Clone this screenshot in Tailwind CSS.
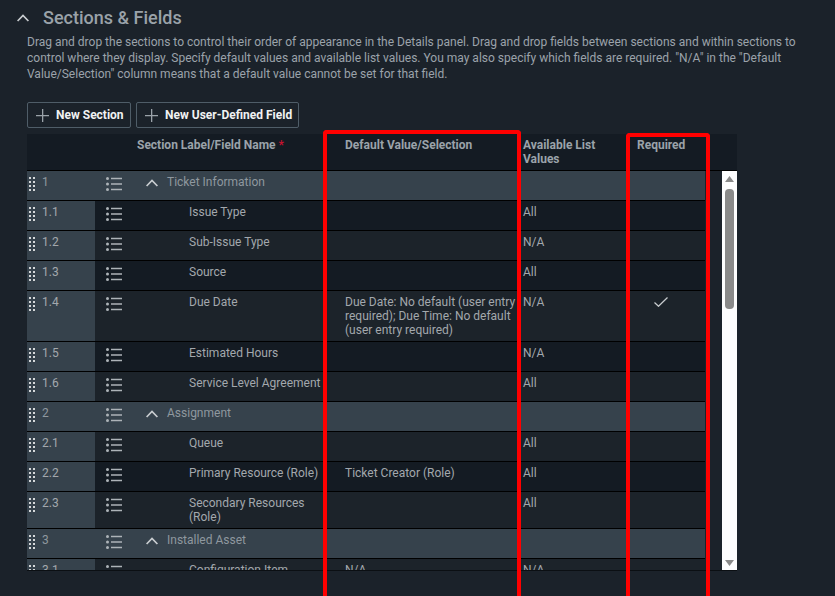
<!DOCTYPE html>
<html lang="en">
  <head>
    <meta charset="UTF-8" />
    <title>Sections &amp; Fields</title>
    <script src="https://cdn.jsdelivr.net/npm/@tailwindcss/browser@4"></script>
  </head>
  <body class="relative h-[596px] overflow-hidden bg-[#1b222a] font-['Roboto',sans-serif] text-xs leading-[14px] text-[#a3a8ad]">
    <svg class="hidden">
      <symbol id="drag" viewBox="0 0 6 14"><path fill="#d5d8da" d="M0 0h2v2H0zM4 0h2v2H4zM0 4h2v2H0zM4 4h2v2H4zM0 8h2v2H0zM4 8h2v2H4zM0 12h2v2H0zM4 12h2v2H4z" /></symbol>
      <symbol id="list" viewBox="0 0 16 14"><path fill="#adb3b8" d="M1.5 0a1.5 1.5 0 1 1 0 3 1.5 1.5 0 0 1 0-3zM1.5 5.500a1.500 1.500 0 1 1 0 3 1.500 1.500 0 0 1 0-3zM1.500 11a1.500 1.500 0 1 1 0 3 1.500 1.500 0 0 1 0-3zM5 .7h11v1.500H5zM5 6.200h11v1.500H5zM5 11.700h11v1.500H5z" /></symbol>
      <symbol id="chev" viewBox="0 0 12 8"><path fill="none" stroke="#c9cdd0" stroke-width="1.700" d="M.6 7 6 1.500 11.400 7" /></symbol>
      <symbol id="plus" viewBox="0 0 13 13"><path fill="#9aa2a9" d="M6 0h1.300v6H13v1.300H7.300V13H6V7.300H0V6h6z" /></symbol>
    </svg>

    <div class="flex items-center pt-[7px] pl-[17px]">
      <svg class="h-2 w-3"><use href="#chev" /></svg>
      <h2 class="ml-[14px] text-[18px] leading-[21px] font-medium text-[#9aa2a9]">Sections &amp; Fields</h2>
    </div>
    <p class="mt-[6px] ml-[27px] w-[775px] leading-[16px] text-[#9ba3aa]">
      Drag and drop the sections to control their order of appearance in the Details panel. Drag and drop fields between sections and within sections to control where they display. Specify default values and available list values. You may also specify which fields are required. "N/A" in the "Default Value/Selection" column means that a default value cannot be set for that field.
    </p>

    <div class="mt-[20px] ml-[27px] flex gap-[5px]">
      <button class="flex h-[26px] w-[104px] items-center rounded-[2px] border border-[#4f5d68] pl-2 font-bold text-[#f1f2f3]">
        <svg class="mr-[7px] h-[13px] w-[13px]"><use href="#plus" /></svg>New Section
      </button>
      <button class="flex h-[26px] w-[163px] items-center rounded-[2px] border border-[#4f5d68] pl-2 font-bold text-[#f1f2f3]">
        <svg class="mr-[7px] h-[13px] w-[13px]"><use href="#plus" /></svg>New User-Defined Field
      </button>
    </div>

    <div class="mt-[6px] ml-[27px] w-[710px] border-b border-[#0b0f13]">
      <div class="grid h-[37px] grid-cols-[110px_198px_188px_114px_100px] border-b border-black bg-[#141b23] pt-1 font-bold text-[#9ba3aa]">
        <div></div>
        <div>Section Label/Field Name<span class="ml-[3px] text-[#c4122f]">*</span></div>
        <div class="pl-[10px]">Default Value/Selection</div>
        <div class="pr-4">Available List Values</div>
        <div>Required</div>
      </div>
      <div class="flex h-[399px] overflow-hidden">
        <div class="w-[678px] shrink-0">
          <div class="grid grid-cols-[68px_42px_198px_188px_114px_48px] border-b border-black bg-[#36424c] text-[#8f989f]">
            <div class="flex gap-[7px] pt-1 pl-[2px]"><svg class="mt-[2px] h-[14px] w-[6px]"><use href="#drag" /></svg><span>1</span></div>
            <div class="h-[29px] pt-[6px] pl-[11px]"><svg class="h-[14px] w-4"><use href="#list" /></svg></div>
            <div class="flex gap-[9px] pt-1 pl-[9px]"><svg class="mt-[4px] h-2 w-3"><use href="#chev" /></svg><span>Ticket Information</span></div>
            <div></div><div></div><div></div>
          </div>
          <div class="grid grid-cols-[68px_42px_198px_188px_114px_48px] border-b border-black bg-[#141b23]">
            <div class="flex gap-[7px] bg-[#36424c] pt-1 pl-[2px]"><svg class="mt-[2px] h-[14px] w-[6px]"><use href="#drag" /></svg><span>1.1</span></div>
            <div class="h-[29px] pt-[6px] pl-[11px]"><svg class="h-[14px] w-4"><use href="#list" /></svg></div>
            <div class="pt-1 pr-[10px] pl-[52px]">Issue Type</div>
            <div></div><div class="pt-1">All</div><div></div>
          </div>
          <div class="grid grid-cols-[68px_42px_198px_188px_114px_48px] border-b border-black bg-[#1c232a]">
            <div class="flex gap-[7px] bg-[#36424c] pt-1 pl-[2px]"><svg class="mt-[2px] h-[14px] w-[6px]"><use href="#drag" /></svg><span>1.2</span></div>
            <div class="h-[29px] pt-[6px] pl-[11px]"><svg class="h-[14px] w-4"><use href="#list" /></svg></div>
            <div class="pt-1 pr-[10px] pl-[52px]">Sub-Issue Type</div>
            <div></div><div class="pt-1">N/A</div><div></div>
          </div>
          <div class="grid grid-cols-[68px_42px_198px_188px_114px_48px] border-b border-black bg-[#141b23]">
            <div class="flex gap-[7px] bg-[#36424c] pt-1 pl-[2px]"><svg class="mt-[2px] h-[14px] w-[6px]"><use href="#drag" /></svg><span>1.3</span></div>
            <div class="h-[29px] pt-[6px] pl-[11px]"><svg class="h-[14px] w-4"><use href="#list" /></svg></div>
            <div class="pt-1 pr-[10px] pl-[52px]">Source</div>
            <div></div><div class="pt-1">All</div><div></div>
          </div>
          <div class="grid grid-cols-[68px_42px_198px_188px_114px_48px] border-b border-black bg-[#1c232a]">
            <div class="flex gap-[7px] bg-[#36424c] pt-1 pl-[2px]"><svg class="mt-[2px] h-[14px] w-[6px]"><use href="#drag" /></svg><span>1.4</span></div>
            <div class="h-[50px] pt-[6px] pl-[11px]"><svg class="h-[14px] w-4"><use href="#list" /></svg></div>
            <div class="pt-1 pr-[10px] pl-[52px]">Due Date</div>
            <div class="pt-1 pr-[4px] pl-[10px]">Due Date: No default (user entry required); Due Time: No default (user entry required)</div>
            <div class="pt-1">N/A</div>
            <div class="flex justify-center pt-[6px]"><svg class="h-[10px] w-[14px]" viewBox="0 0 14 10"><path fill="none" stroke="#c9cdd0" stroke-width="1.200" d="M.5 5.500 4.500 9.300 13.500.5" /></svg></div>
          </div>
          <div class="grid grid-cols-[68px_42px_198px_188px_114px_48px] border-b border-black bg-[#141b23]">
            <div class="flex gap-[7px] bg-[#36424c] pt-1 pl-[2px]"><svg class="mt-[2px] h-[14px] w-[6px]"><use href="#drag" /></svg><span>1.5</span></div>
            <div class="h-[29px] pt-[6px] pl-[11px]"><svg class="h-[14px] w-4"><use href="#list" /></svg></div>
            <div class="pt-1 pr-[10px] pl-[52px]">Estimated Hours</div>
            <div></div><div class="pt-1">N/A</div><div></div>
          </div>
          <div class="grid grid-cols-[68px_42px_198px_188px_114px_48px] border-b border-black bg-[#1c232a]">
            <div class="flex gap-[7px] bg-[#36424c] pt-1 pl-[2px]"><svg class="mt-[2px] h-[14px] w-[6px]"><use href="#drag" /></svg><span>1.6</span></div>
            <div class="h-[29px] pt-[6px] pl-[11px]"><svg class="h-[14px] w-4"><use href="#list" /></svg></div>
            <div class="pt-1 pr-[10px] pl-[52px]">Service Level Agreement</div>
            <div></div><div class="pt-1">All</div><div></div>
          </div>
          <div class="grid grid-cols-[68px_42px_198px_188px_114px_48px] border-b border-black bg-[#36424c] text-[#8f989f]">
            <div class="flex gap-[7px] pt-1 pl-[2px]"><svg class="mt-[2px] h-[14px] w-[6px]"><use href="#drag" /></svg><span>2</span></div>
            <div class="h-[29px] pt-[6px] pl-[11px]"><svg class="h-[14px] w-4"><use href="#list" /></svg></div>
            <div class="flex gap-[9px] pt-1 pl-[9px]"><svg class="mt-[4px] h-2 w-3"><use href="#chev" /></svg><span>Assignment</span></div>
            <div></div><div></div><div></div>
          </div>
          <div class="grid grid-cols-[68px_42px_198px_188px_114px_48px] border-b border-black bg-[#1c232a]">
            <div class="flex gap-[7px] bg-[#36424c] pt-1 pl-[2px]"><svg class="mt-[2px] h-[14px] w-[6px]"><use href="#drag" /></svg><span>2.1</span></div>
            <div class="h-[29px] pt-[6px] pl-[11px]"><svg class="h-[14px] w-4"><use href="#list" /></svg></div>
            <div class="pt-1 pr-[10px] pl-[52px]">Queue</div>
            <div></div><div class="pt-1">All</div><div></div>
          </div>
          <div class="grid grid-cols-[68px_42px_198px_188px_114px_48px] border-b border-black bg-[#141b23]">
            <div class="flex gap-[7px] bg-[#36424c] pt-1 pl-[2px]"><svg class="mt-[2px] h-[14px] w-[6px]"><use href="#drag" /></svg><span>2.2</span></div>
            <div class="h-[29px] pt-[6px] pl-[11px]"><svg class="h-[14px] w-4"><use href="#list" /></svg></div>
            <div class="pt-1 pr-[10px] pl-[52px]">Primary Resource (Role)</div>
            <div class="pt-1 pl-[10px]">Ticket Creator (Role)</div><div class="pt-1">All</div><div></div>
          </div>
          <div class="grid grid-cols-[68px_42px_198px_188px_114px_48px] border-b border-black bg-[#1c232a]">
            <div class="flex gap-[7px] bg-[#36424c] pt-1 pl-[2px]"><svg class="mt-[2px] h-[14px] w-[6px]"><use href="#drag" /></svg><span>2.3</span></div>
            <div class="h-[36px] pt-[6px] pl-[11px]"><svg class="h-[14px] w-4"><use href="#list" /></svg></div>
            <div class="w-[172px] pt-1 pl-[52px]">Secondary Resources (Role)</div>
            <div></div><div class="pt-1">All</div><div></div>
          </div>
          <div class="grid grid-cols-[68px_42px_198px_188px_114px_48px] border-b border-black bg-[#36424c] text-[#8f989f]">
            <div class="flex gap-[7px] pt-1 pl-[2px]"><svg class="mt-[2px] h-[14px] w-[6px]"><use href="#drag" /></svg><span>3</span></div>
            <div class="h-[29px] pt-[6px] pl-[11px]"><svg class="h-[14px] w-4"><use href="#list" /></svg></div>
            <div class="flex gap-[9px] pt-1 pl-[9px]"><svg class="mt-[4px] h-2 w-3"><use href="#chev" /></svg><span>Installed Asset</span></div>
            <div></div><div></div><div></div>
          </div>
          <div class="grid grid-cols-[68px_42px_198px_188px_114px_48px] border-b border-black bg-[#1c232a]">
            <div class="flex gap-[7px] bg-[#36424c] pt-1 pl-[2px]"><svg class="mt-[2px] h-[14px] w-[6px]"><use href="#drag" /></svg><span>3.1</span></div>
            <div class="h-[29px] pt-[6px] pl-[11px]"><svg class="h-[14px] w-4"><use href="#list" /></svg></div>
            <div class="pt-1 pr-[10px] pl-[52px]">Configuration Item</div>
            <div class="pt-1 pl-[10px]">N/A</div><div class="pt-1">N/A</div><div></div>
          </div>
        </div>
        <div class="ml-[17px] flex w-[15px] flex-col items-center bg-[#fdfdfe] pt-[5px]">
          <svg class="h-[6px] w-[9px]" viewBox="0 0 9 6"><path fill="#8a8a8a" d="M4.500 0 9 6H0z" /></svg>
          <div class="mt-[7px] h-[120px] w-[9px] rounded-[4px] bg-[#8a8a8a]"></div>
          <svg class="mt-auto mb-[4px] h-[6px] w-[9px]" viewBox="0 0 9 6"><path fill="#8a8a8a" d="M0 0h9L4.500 6z" /></svg>
        </div>
      </div>
    </div>

    <!-- red highlight boxes drawn over the table -->
    <div class="absolute top-[130px] left-[323px] h-[466px] w-[198px] rounded-t-[4px] border-4 border-b-0 border-[#ff0000]"></div>
    <div class="absolute top-[133px] left-[626px] h-[463px] w-[84px] rounded-t-[4px] border-4 border-b-0 border-[#ff0000]"></div>
  </body>
</html>
